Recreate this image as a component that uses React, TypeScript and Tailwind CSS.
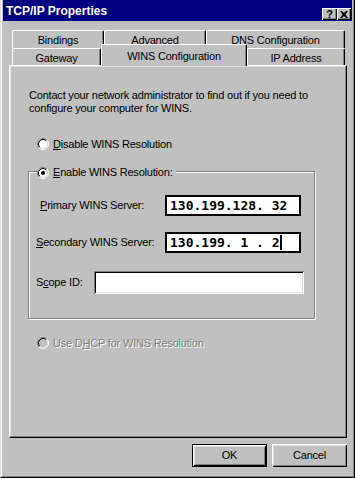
function Radio({ checked, disabled }: { checked?: boolean; disabled?: boolean }) {
  return (
    <svg width="12" height="12" viewBox="0 0 12 12" className="shrink-0">
      <circle cx="6" cy="6" r="4.5" fill={disabled ? '#c0c0c0' : '#fff'} />
      <path d="M2.11 9.89A5.5 5.5 0 0 1 9.89 2.11" fill="none" stroke="#808080" />
      <path d="M9.89 2.11A5.5 5.5 0 0 1 2.11 9.89" fill="none" stroke="#fff" />
      <path d="M2.82 9.18A4.5 4.5 0 0 1 9.18 2.82" fill="none" stroke="#000" />
      <path d="M9.18 2.82A4.5 4.5 0 0 1 2.82 9.18" fill="none" stroke="#dfdfdf" />
      {checked && <circle cx="6" cy="6" r="2" fill="#000" />}
    </svg>
  );
}

function Tab({ children, className, active }: { children: React.ReactNode; className: string; active?: boolean }) {
  return (
    <div
      className={`flex justify-center ${active ? 'pt-[5px]' : 'pt-[3px]'} leading-[13px] bg-[#c0c0c0] border-l border-t border-r border-l-white border-t-white border-r-black rounded-t-[2px] shadow-[inset_-1px_0_#808080] ${className}`}
    >
      {children}
    </div>
  );
}

function Btn({ children, isDefault }: { children: React.ReactNode; isDefault?: boolean }) {
  return (
    <div
      className={`w-[75px] h-[23px] flex items-center justify-center bg-[#c0c0c0] ${
        isDefault
          ? 'border border-black shadow-[inset_1px_1px_#fff,inset_-1px_-1px_#000,inset_2px_2px_#dfdfdf,inset_-2px_-2px_#808080]'
          : 'shadow-[inset_1px_1px_#fff,inset_-1px_-1px_#000,inset_2px_2px_#dfdfdf,inset_-2px_-2px_#808080]'
      }`}
    >
      {children}
    </div>
  );
}

export default function App() {
  return (
    <div className="w-[355px] h-[478px] bg-[#c0c0c0] border-l border-r border-b border-l-[#dfdfdf] border-r-black border-b-black font-['Liberation_Sans',Arial,sans-serif] text-[11px] tracking-[-0.2px] text-black">
      <div className="h-full border-l border-r border-b border-l-white border-r-[#808080] border-b-[#808080] px-[1px]">
        {/* title bar */}
        <div className="h-[21px] bg-[#000080] flex items-start justify-between">
          <span className="pl-[3px] pt-[4px] leading-[14px] text-white font-bold text-[12px] tracking-normal">TCP/IP Properties</span>
          <div className="flex mt-[8px] mr-[1px]">
            <div className="w-[15px] h-[12px] flex items-center justify-center bg-[#c0c0c0] shadow-[inset_1px_1px_#fff,inset_-1px_-1px_#000,inset_-2px_-2px_#808080] font-bold text-[11px] leading-none tracking-normal">
              ?
            </div>
            <div className="w-[14px] h-[12px] flex items-center justify-center bg-[#c0c0c0] shadow-[inset_1px_1px_#fff,inset_-1px_-1px_#000,inset_-2px_-2px_#808080]">
              <svg width="8" height="7" viewBox="0 0 8 7">
                <path d="M0 0h2l2 2 2-2h2L5.5 3.5 8 7H6L4 5 2 7H0l2.5-3.5z" fill="#000" />
              </svg>
            </div>
          </div>
        </div>

        {/* tabs */}
        <div className="mt-[9px] ml-[9px] w-[333px]">
          <div className="flex h-[18px]">
            <Tab className="w-[92px] h-[18px]">Bindings</Tab>
            <Tab className="w-[102px] h-[18px]">Advanced</Tab>
            <Tab className="w-[139px] h-[18px]">DNS Configuration</Tab>
          </div>
          <div className="flex h-[17px] items-end">
            <Tab className="w-[89px] h-[17px]">Gateway</Tab>
            <Tab active className="w-[146px] h-[22px] -mb-[1px] relative z-10">
              WINS Configuration
            </Tab>
            <Tab className="w-[98px] h-[17px]">IP Address</Tab>
          </div>
        </div>

        {/* page */}
        <div className="ml-[6px] w-[338px] h-[373px] border-l border-t border-r border-b border-l-white border-t-white border-r-black border-b-black shadow-[inset_-1px_-1px_#808080,inset_1px_1px_#dfdfdf]">
          <p className="ml-[19px] mt-[23px] leading-[13px]">
            Contact your network administrator to find out if you need to
            <br />
            configure your computer for WINS.
          </p>

          <div className="ml-[27px] mt-[23px] h-[12px] flex items-center gap-[4px]">
            <Radio />
            <span className="leading-[13px]">
              <u>D</u>isable WINS Resolution
            </span>
          </div>

          <div className="ml-[18px] mt-[21px] w-[287px] h-[148px] border border-[#808080] shadow-[inset_1px_1px_#fff,1px_1px_#fff]">
            <div className="-mt-[6px] ml-[8px] w-fit h-[13px] flex items-center gap-[4px] bg-[#c0c0c0] pr-[3px]">
              <Radio checked />
              <span className="leading-[13px]">
                <u>E</u>nable WINS Resolution:
              </span>
            </div>

            <div className="mt-[16px] ml-[11px] h-[21px] flex items-center">
              <span className="w-[125px]">
                <u>P</u>rimary WINS Server:
              </span>
              <div className="w-[136px] h-[21px] border-2 border-black bg-white flex items-center pl-[3px] font-['DejaVu_Sans_Mono',monospace] font-bold text-[13px] tracking-normal whitespace-pre">
                130.199.128. 32
              </div>
            </div>

            <div className="mt-[16px] ml-[7px] h-[21px] flex items-center">
              <span className="w-[129px]">
                <u>S</u>econdary WINS Server:
              </span>
              <div className="w-[136px] h-[21px] border-2 border-black bg-white flex items-center pl-[3px] font-['DejaVu_Sans_Mono',monospace] font-bold text-[13px] tracking-normal whitespace-pre">
                130.199. 1 . 2<span className="inline-block w-[2px] h-[15px] bg-black" />
              </div>
            </div>

            <div className="mt-[18px] ml-[7px] h-[23px] flex items-center">
              <span className="w-[58px]">
                S<u>c</u>ope ID:
              </span>
              <div className="w-[210px] h-[23px] bg-white shadow-[inset_1px_1px_#808080,inset_-1px_-1px_#fff,inset_2px_2px_#000,inset_-2px_-2px_#dfdfdf]" />
            </div>
          </div>

          <div className="ml-[27px] mt-[18px] h-[12px] flex items-center gap-[4px]">
            <Radio disabled />
            <span className="leading-[13px] text-[#808080] [text-shadow:1px_1px_0_#fff]">
              Use D<u>H</u>CP for WINS Resolution
            </span>
          </div>
        </div>

        {/* buttons */}
        <div className="ml-[6px] mt-[6px] w-[338px] flex justify-end gap-[5px]">
          <Btn isDefault>OK</Btn>
          <Btn>Cancel</Btn>
        </div>
      </div>
    </div>
  );
}
